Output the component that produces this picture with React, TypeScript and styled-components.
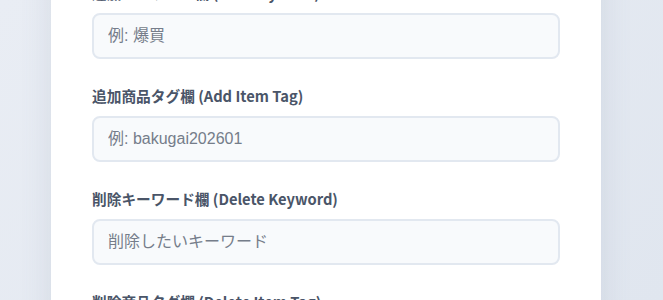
import styled, { createGlobalStyle } from 'styled-components'

const GlobalStyle = createGlobalStyle`
  html, body {
    margin: 0;
    padding: 0;
    height: 100%;
    overflow: hidden;
  }
  body {
    background: linear-gradient(135deg, #e9edf4 0%, #e0e6ef 100%);
    font-family: "Noto Sans CJK JP", sans-serif;
  }
`

const Page = styled.div`
  display: flex;
  justify-content: center;
  padding-right: 11px;
  margin-top: -56px;
`

const Card = styled.div`
  width: 550px;
  box-sizing: border-box;
  background: #ffffff;
  padding: 40px 41px;
  box-shadow: 0 10px 30px rgba(100, 116, 139, 0.14);
`

const Field = styled.div`
  display: flex;
  flex-direction: column;
  margin-bottom: 28px;
`

const Label = styled.label`
  font-family: "Noto Sans CJK JP", sans-serif;
  font-size: 14.7px;
  font-weight: 700;
  line-height: 17px;
  color: #4a5568;
  margin-bottom: 12px;
`

const Input = styled.input`
  box-sizing: border-box;
  height: 46px;
  width: 100%;
  padding: 12px 14px;
  border: 2px solid #e2e8f0;
  border-radius: 8px;
  background: #f8fafc;
  font-family: "Liberation Sans", "Noto Sans CJK JP", sans-serif;
  font-size: 16px;
  color: #2d3748;
  outline: none;

  &::placeholder {
    color: #757d8a;
  }
`

const fields = [
  { label: '追加キーワード欄', en: '(Add Keyword)', placeholder: '例: 爆買' },
  { label: '追加商品タグ欄', en: '(Add Item Tag)', placeholder: '例: bakugai202601' },
  { label: '削除キーワード欄', en: '(Delete Keyword)', placeholder: '削除したいキーワード' },
  { label: '削除商品タグ欄', en: '(Delete Item Tag)', placeholder: '削除したい商品タグ' },
]

export default function App() {
  return (
    <>
      <GlobalStyle />
      <Page>
        <Card>
          {fields.map(f => (
            <Field key={f.label}>
              <Label>
                {f.label} {f.en}
              </Label>
              <Input placeholder={f.placeholder} />
            </Field>
          ))}
        </Card>
      </Page>
    </>
  )
}
